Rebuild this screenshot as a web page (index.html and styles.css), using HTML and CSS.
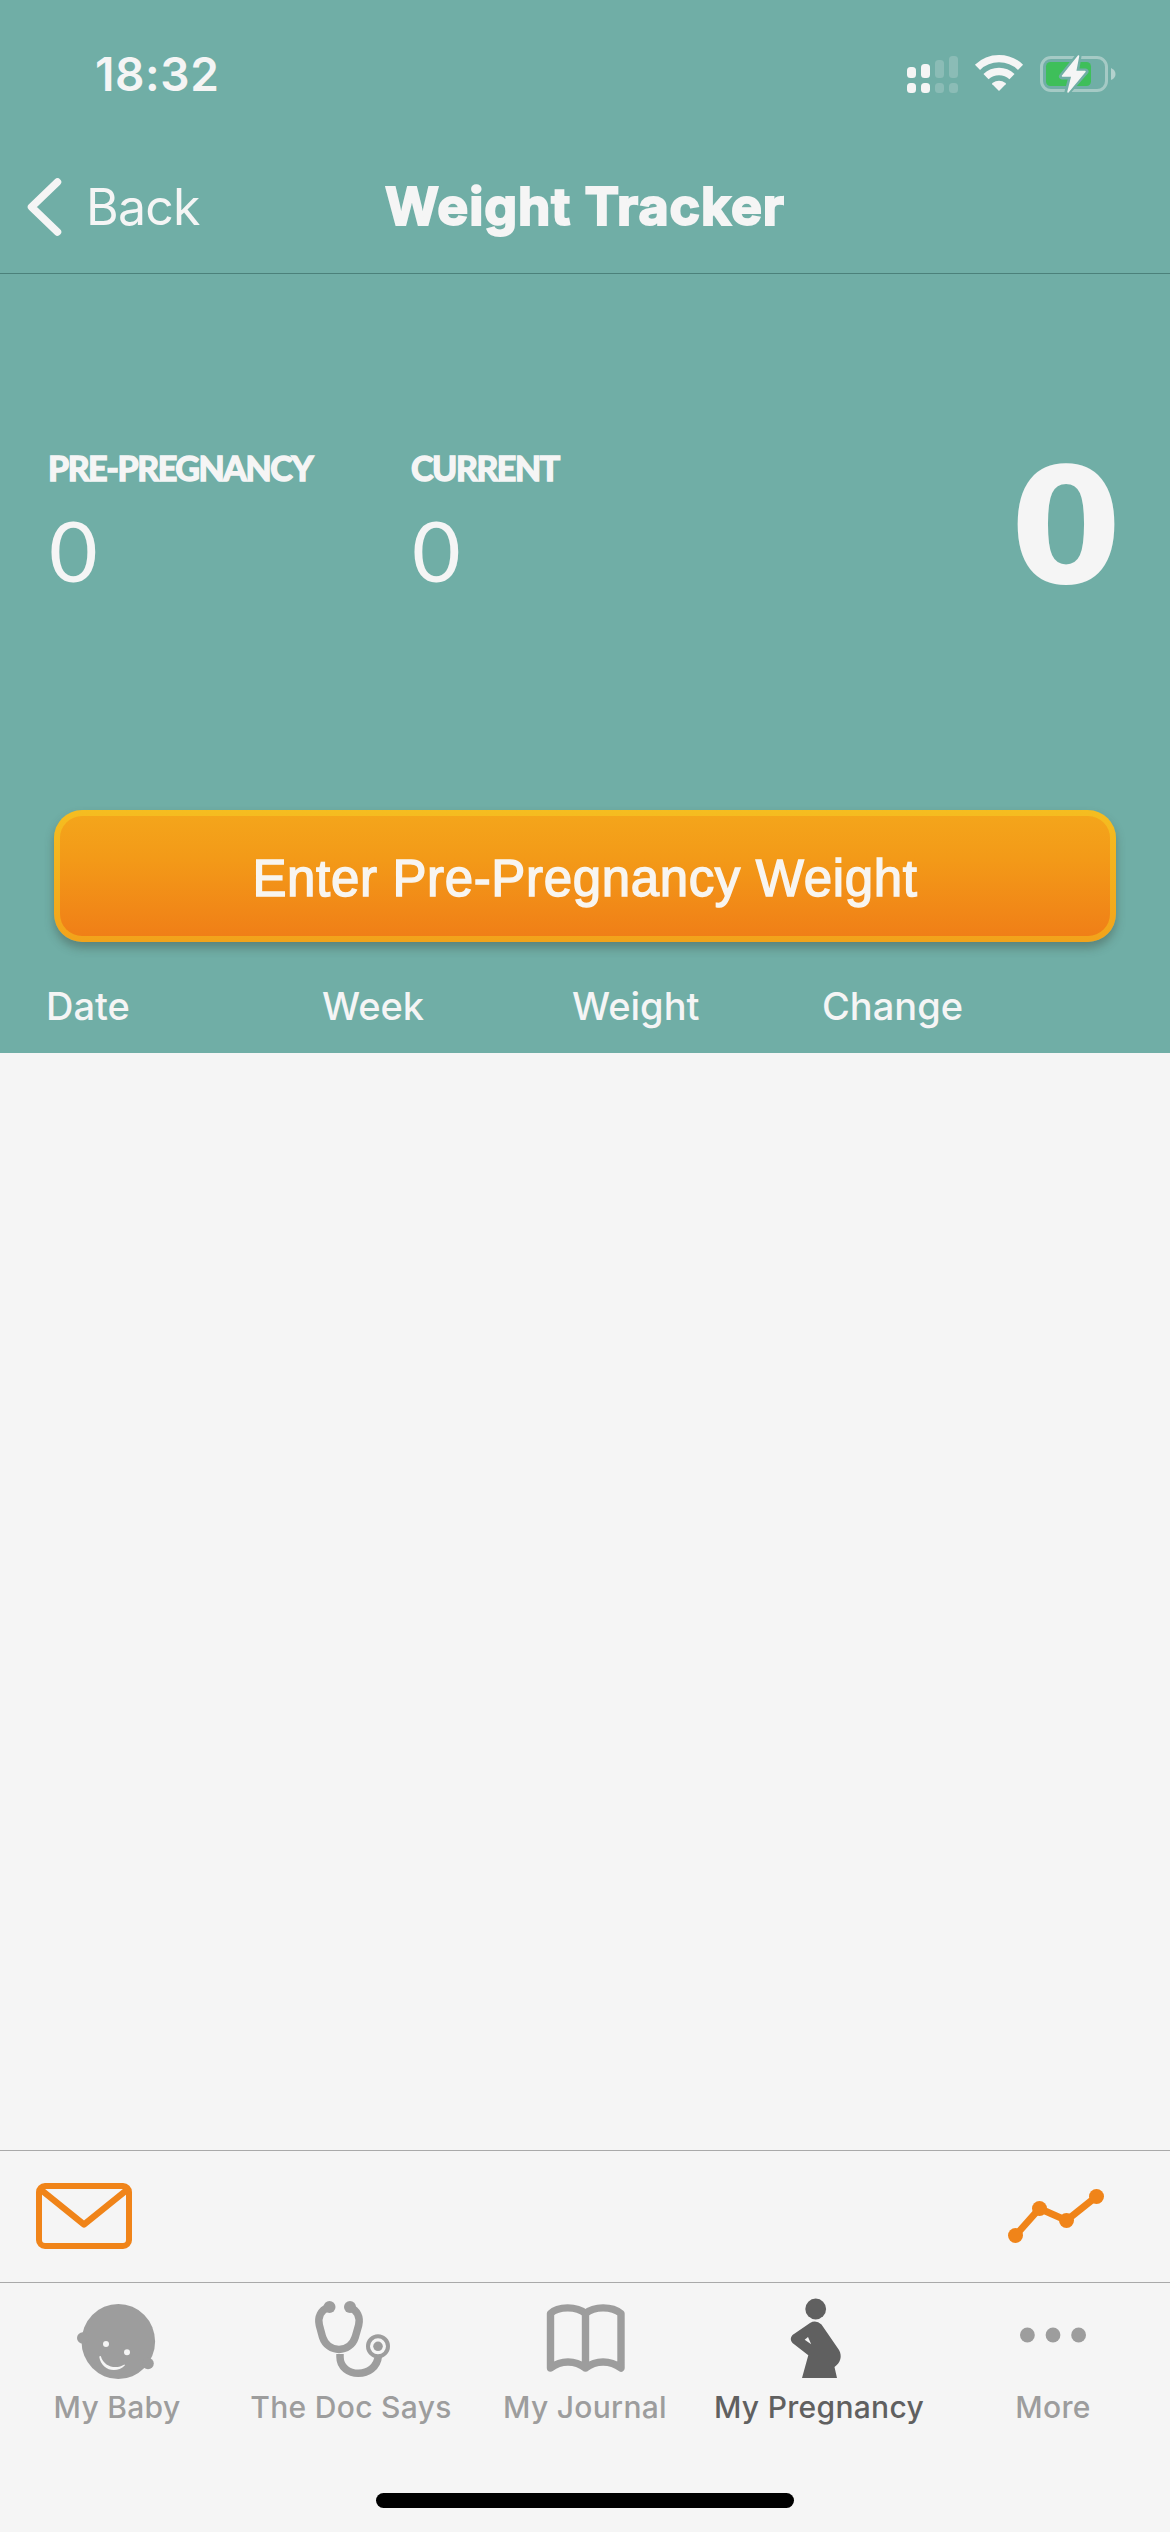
FILE: index.html
```html
<!DOCTYPE html>
<html lang="en">
<head>
    <meta charset="UTF-8">
    <meta name="viewport" content="width=device-width, initial-scale=1.0">
    <title>Weight Tracker</title>
    <link rel="stylesheet" href="styles.css">
</head>
<body>
    <header>
        <div class="status-bar">
            <span class="time">18:32</span>
            <svg class="status-icons" viewBox="0 0 212 40" width="212" height="40">
                <!-- signal -->
                <g fill="#f5f5f5">
                    <rect x="1" y="13" width="9" height="11" rx="3.5"/>
                    <rect x="15" y="10" width="9" height="14" rx="3.5"/>
                    <rect x="1" y="29" width="9" height="10" rx="3.5"/>
                    <rect x="15" y="29" width="9" height="10" rx="3.5"/>
                </g>
                <g fill="#f5f5f5" opacity="0.2">
                    <rect x="29" y="6" width="9" height="18" rx="3.5"/>
                    <rect x="43" y="2" width="9" height="22" rx="3.5"/>
                    <rect x="29" y="29" width="9" height="10" rx="3.5"/>
                    <rect x="43" y="29" width="9" height="10" rx="3.5"/>
                </g>
                <!-- wifi -->
                <g fill="none" stroke="#f5f5f5" stroke-width="7.4">
                    <path d="M71.5 13.3A31 31 0 0 1 114.500 13.3"/>
                    <path d="M80 22.600A19 19 0 0 1 106 22.600"/>
                </g>
                <path d="M93 37L86.300 30.200Q85.800 29.600 86.400 29.100Q93 24.500 99.600 29.100Q100.200 29.600 99.700 30.200Z" fill="#f5f5f5"/>
                <!-- battery -->
                <rect x="135.500" y="3.500" width="65" height="33" rx="9.500" fill="none" stroke="#f5f5f5" stroke-opacity="0.4" stroke-width="3"/>
                <path d="M205 14Q209.500 16 209.500 20Q209.500 24 205 26Z" fill="#f5f5f5" fill-opacity="0.5"/>
                <rect x="140" y="8" width="45" height="24" rx="4.500" fill="#3ebf5a"/>
                <path d="M172.500 2L156 22.500H165.500L161.500 38L179.500 17.500H170Z" fill="#f5f5f5" stroke="#70aea6" stroke-width="6" stroke-linejoin="round"/>
                <path d="M172.500 2L156.500 22H166L162 38L179 17.500H169.500Z" fill="#f5f5f5" stroke="#f5f5f5" stroke-width="1.500" stroke-linejoin="round"/>
            </svg>
        </div>
        <nav class="nav-bar">
            <a class="back">
                <svg viewBox="0 0 36 60" width="36" height="60">
                    <path d="M31.500 5L5.500 30L31.500 55" fill="none" stroke="#f5f5f5" stroke-width="7.500" stroke-linecap="round" stroke-linejoin="round"/>
                </svg>
                <span>Back</span>
            </a>
            <h1>Weight Tracker</h1>
        </nav>

        <div class="summary">
            <div class="stat">
                <span class="label">PRE-PREGNANCY</span>
                <span class="value">0</span>
            </div>
            <div class="stat">
                <span class="label">CURRENT</span>
                <span class="value">0</span>
            </div>
            <span class="total">0</span>
        </div>

        <button class="enter-weight">Enter Pre-Pregnancy Weight</button>

        <div class="columns">
            <span>Date</span>
            <span>Week</span>
            <span>Weight</span>
            <span>Change</span>
        </div>
    </header>

    <main class="entries"></main>

    <div class="toolbar">
        <svg viewBox="0 0 96 66" width="96" height="66">
            <rect x="3" y="3" width="90" height="60" rx="6" fill="none" stroke="#f08419" stroke-width="6"/>
            <path d="M4 6L48 41.500L92 6" fill="none" stroke="#f08419" stroke-width="6.200" stroke-linejoin="round"/>
        </svg>
        <svg viewBox="0 0 96 54" width="96" height="54">
            <path d="M7.500 46.500L31.500 19.500L58.500 31.500L88.500 7.500" fill="none" stroke="#f08419" stroke-width="7"/>
            <g fill="#f08419">
                <circle cx="7.500" cy="46.500" r="7.500"/>
                <circle cx="31.500" cy="19.500" r="7.500"/>
                <circle cx="58.500" cy="31.500" r="7.500"/>
                <circle cx="88.500" cy="7.500" r="7.500"/>
            </g>
        </svg>
    </div>

    <footer>
        <div class="tabs">
            <a class="tab">
                <svg viewBox="0 0 84 84" width="84" height="84">
                    <g fill="currentColor">
                        <ellipse cx="43.300" cy="43.500" rx="36.800" ry="37.500"/>
                        <circle cx="7.800" cy="40" r="5.800"/>
                        <circle cx="73" cy="65.500" r="5.800"/>
                    </g>
                    <g fill="#f5f5f5">
                        <circle cx="31" cy="46" r="3"/>
                        <circle cx="52" cy="54.300" r="3"/>
                        <path d="M24.200 58.500C26 72 41 76.500 50 67.200L49.500 66.500C41.500 71.500 29 69.500 25.800 58Z"/>
                    </g>
                </svg>
                <span>My Baby</span>
            </a>
            <a class="tab">
                <svg viewBox="0 0 84 84" width="84" height="84">
                    <g fill="none" stroke="currentColor" stroke-width="7.500">
                        <path d="M19 9.500C12 12 8.500 19 10.300 27L13.500 39C19 55.500 41 55.500 46.300 39L49.700 27C51.500 19 48 12 41 9.500"/>
                        <path d="M31 56V59C31 80 67 82 69.500 57.500"/>
                    </g>
                    <circle cx="20.500" cy="9" r="6" fill="currentColor"/>
                    <circle cx="41" cy="9" r="6" fill="currentColor"/>
                    <circle cx="69" cy="48.300" r="10" fill="#f5f5f5" stroke="currentColor" stroke-width="4"/>
                    <circle cx="69" cy="48.300" r="4.800" fill="currentColor"/>
                </svg>
                <span>The Doc Says</span>
            </a>
            <a class="tab">
                <svg viewBox="0 0 84 84" width="84" height="84">
                    <path d="M42.500 70V15.500C34 8 15 8 7.500 15.500V70C18 62 32 62 42.500 70C53 62 67 62 78 70V15.500C69 8 51 8 42.500 15.500" fill="none" stroke="currentColor" stroke-width="7.400" stroke-linejoin="round" stroke-linecap="round"/>
                </svg>
                <span>My Journal</span>
            </a>
            <a class="tab active">
                <svg viewBox="0 0 84 84" width="84" height="84">
                    <circle cx="38.700" cy="11" r="10.400" fill="currentColor"/>
                    <path d="M33 25Q39 21.500 44.500 26.500L62 52C65.500 58 63.500 65 57.500 69L60 80H25L31.300 57.300L15.500 45Q12 41 15.500 37Z" fill="currentColor"/>
                    <path d="M27.700 41.700L31 39L34.200 46.200Z" fill="#f5f5f5"/>
                </svg>
                <span>My Pregnancy</span>
            </a>
            <a class="tab">
                <svg viewBox="0 0 84 84" width="84" height="84">
                    <g fill="currentColor">
                        <circle cx="16.400" cy="37" r="7.400"/>
                        <circle cx="42" cy="37" r="7.400"/>
                        <circle cx="67.600" cy="37" r="7.400"/>
                    </g>
                </svg>
                <span>More</span>
            </a>
        </div>
        <div class="home-indicator"></div>
    </footer>
</body>
</html>
```

FILE: styles.css
```css
* {
    box-sizing: border-box;
}

body {
    font-family: Inter, "Liberation Sans", sans-serif;
    margin: 0;
    width: 1170px;
    height: 2532px;
    display: flex;
    flex-direction: column;
    background-color: #f5f5f5;
    color: #f5f5f5;
}

header {
    height: 1053px;
    background-color: #70aea6;
    display: flex;
    flex-direction: column;
}

.status-bar {
    height: 140px;
    padding: 45px 52px 0 95px;
    display: flex;
    justify-content: space-between;
}

.time {
    font-size: 46px;
    line-height: 58px;
    font-weight: 600;
    letter-spacing: 0.6px;
}

.status-icons {
    margin-top: 9px;
}

.nav-bar {
    height: 134px;
    border-bottom: 1px solid #4b817a;
    display: grid;
    grid-template-columns: 1fr auto 1fr;
    align-items: center;
    padding: 0 26px;
}

.back {
    display: flex;
    align-items: center;
    gap: 24px;
    font-size: 50px;
    font-weight: 400;
    letter-spacing: -0.8px;
}

h1 {
    margin: 0;
    font-size: 52px;
    font-weight: 700;
    letter-spacing: 0.9px;
    -webkit-text-stroke: 2px #f5f5f5;
    stroke-linejoin: round;
}

.summary {
    height: 536px;
    padding: 172px 48px 0;
    display: grid;
    grid-template-columns: 363px 1fr auto;
}

.stat {
    display: flex;
    flex-direction: column;
}

.label {
    font-family: Lato, sans-serif;
    font-size: 34px;
    line-height: 44px;
    font-weight: 700;
    letter-spacing: -1.4px;
    -webkit-text-stroke: 1.5px #f5f5f5;
}

.value {
    font-family: Lato, sans-serif;
    font-size: 84px;
    line-height: 100px;
    margin: 10px 0 0 1px;
}

.total {
    font-family: "DejaVu Sans", sans-serif;
    font-size: 161px;
    line-height: 164px;
    font-weight: 700;
}

.enter-weight {
    width: 1062px;
    height: 132px;
    margin: 0 auto;
    flex-shrink: 0;
    padding: 4px 0 0;
    border: 6px solid transparent;
    border-radius: 28px;
    background: linear-gradient(#f4a51b, #f39a18 35%, #f07f17) padding-box,
        linear-gradient(#f5bd20, #f2a31b) border-box;
    box-shadow: 0 6px 10px rgba(60, 70, 60, 0.4);
    color: #f8f5f0;
    font-family: "Liberation Sans", Arial, sans-serif;
    font-size: 51px;
    letter-spacing: 0.65px;
    -webkit-text-stroke: 1.4px #f8f5f0;
}

.columns {
    display: grid;
    grid-template-columns: 276px 250px 250px 1fr;
    padding: 41px 46px 0;
    font-size: 38px;
    line-height: 46px;
    font-weight: 500;
}

.entries {
    flex: 1;
}

.toolbar {
    height: 132px;
    border-top: 1px solid #a9a9a9;
    padding: 0 66px 1px 36px;
    display: flex;
    align-items: center;
    justify-content: space-between;
}

footer {
    height: 250px;
    border-top: 1px solid #a9a9a9;
}

.tabs {
    height: 210px;
    padding-top: 15px;
    display: grid;
    grid-template-columns: repeat(5, 1fr);
}

.tab {
    display: flex;
    flex-direction: column;
    align-items: center;
    color: #9d9d9d;
    font-size: 30px;
    line-height: 38px;
    font-weight: 500;
    letter-spacing: 0.3px;
    white-space: nowrap;
}

.tab span {
    margin-top: 6px;
}

.active {
    color: #606060;
}

.home-indicator {
    width: 418px;
    height: 15px;
    margin: 0 auto;
    border-radius: 8px;
    background-color: #000;
}
```
